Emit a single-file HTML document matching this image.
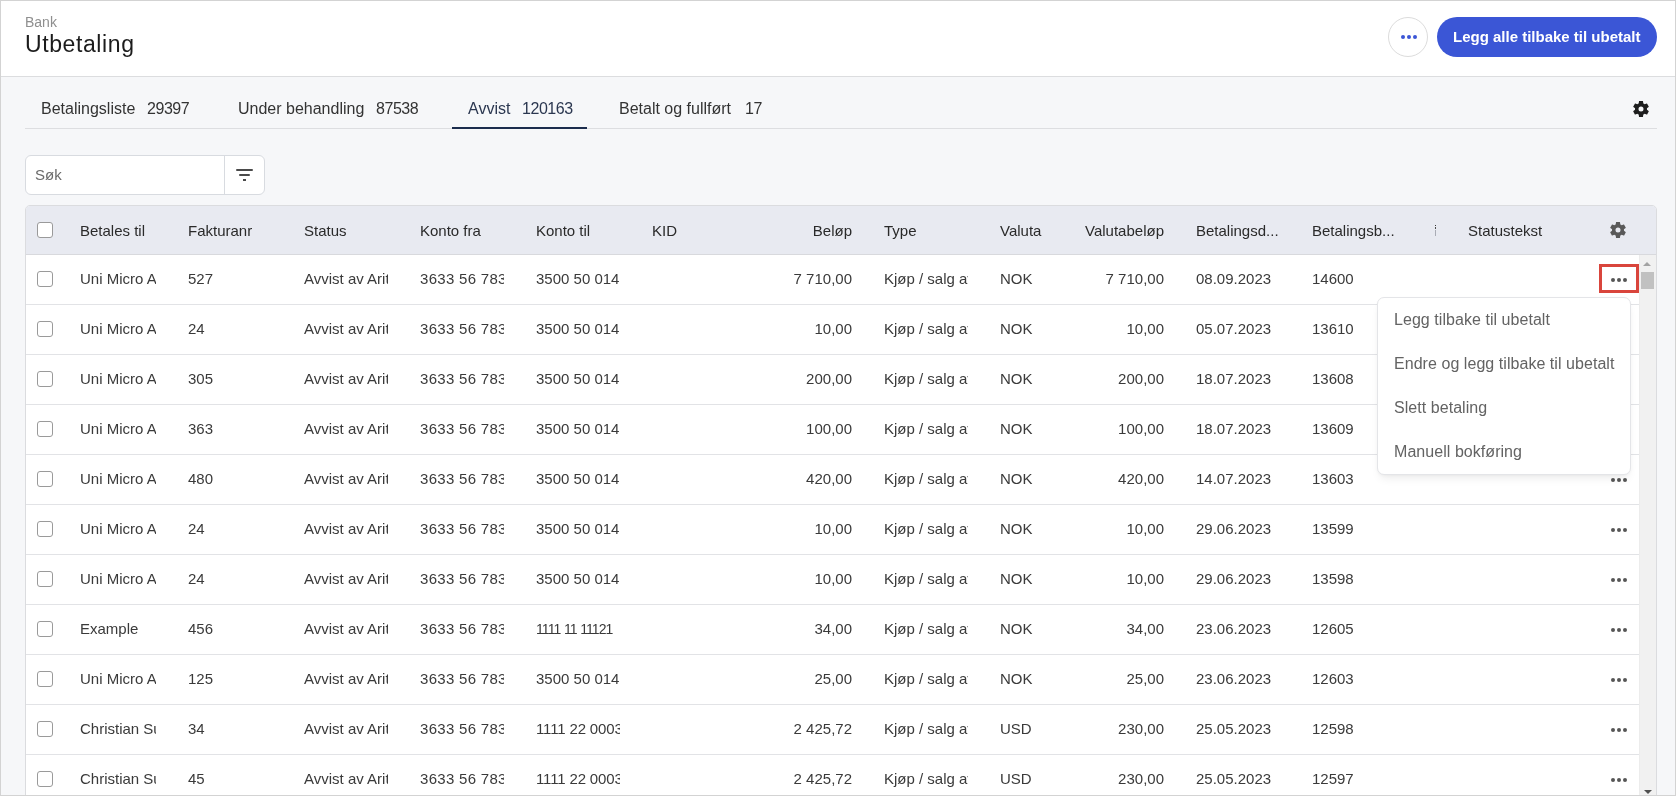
<!DOCTYPE html>
<html><head><meta charset="utf-8"><title>Utbetaling</title>
<style>
*{box-sizing:border-box;margin:0;padding:0}
html,body{width:1676px;height:796px;overflow:hidden;}
#root{position:absolute;left:0;top:0;width:1676px;height:796px;will-change:transform;background:#f6f7f9;font-family:"Liberation Sans",sans-serif;color:#333}
.a{position:absolute;white-space:nowrap}
.ic{position:absolute;display:block}
.dot{position:absolute;border-radius:50%;display:block}
#frame{position:absolute;left:0;top:0;width:1676px;height:796px;border:1px solid #d3d3d3;pointer-events:none;z-index:50}
#hdr{position:absolute;left:0;top:0;width:1676px;height:77px;background:#fff;border-bottom:1px solid #dcdddf}
.t{position:absolute;white-space:nowrap;line-height:20px;height:20px}
.clip{overflow:hidden}
.cb{position:absolute;width:16px;height:16px;border:1.5px solid #9a9a9a;border-radius:3px;background:#fff}
.hd{color:#2a2a2a;font-size:15px}
.cell{color:#3a3a3a;font-size:15px}
.r{text-align:right}
.row{position:absolute;left:26px;width:1613px;height:50px;background:#fff;border-bottom:1px solid #e2e3e6}
.mi{position:absolute;left:16px;font-size:16px;color:#636363;line-height:20px;white-space:nowrap;letter-spacing:0.05px}
</style></head><body><div id="root">
<div id="hdr">
  <div class="t" style="left:25px;top:12px;font-size:14px;color:#8f8f8f">Bank</div>
  <div class="t" style="left:25px;top:30px;font-size:23px;letter-spacing:0.6px;line-height:28px;height:28px;color:#1c1c1c">Utbetaling</div>
  <div class="a" style="left:1388px;top:17px;width:40px;height:40px;border:1px solid #dcdcdc;border-radius:50%;background:#fff"></div>
  <i class="dot" style="left:1401px;top:35px;width:4px;height:4px;background:#3b56d6"></i><i class="dot" style="left:1407px;top:35px;width:4px;height:4px;background:#3b56d6"></i><i class="dot" style="left:1413px;top:35px;width:4px;height:4px;background:#3b56d6"></i>
  <div class="a" style="left:1437px;top:17px;width:220px;height:40px;border-radius:20px;background:#3b56d6"></div>
  <div class="t" style="left:1453px;top:27px;font-size:15px;font-weight:bold;color:#fff">Legg alle tilbake til ubetalt</div>
</div>

<div class="a" style="left:25px;top:128px;width:1632px;height:1px;background:#dddee1"></div>
<div class="t" style="left:41px;top:99px;font-size:16px;color:#333">Betalingsliste</div>
<div class="t" style="left:147px;top:99px;font-size:16px;letter-spacing:-0.45px;color:#333">29397</div>
<div class="t" style="left:238px;top:99px;font-size:16px;color:#333">Under behandling</div>
<div class="t" style="left:376px;top:99px;font-size:16px;letter-spacing:-0.45px;color:#333">87538</div>
<div class="t" style="left:468px;top:99px;font-size:16px;color:#2b3750">Avvist</div>
<div class="t" style="left:522px;top:99px;font-size:16px;letter-spacing:-0.45px;color:#2b3750">120163</div>
<div class="t" style="left:619px;top:99px;font-size:16px;color:#333">Betalt og fullført</div>
<div class="t" style="left:745px;top:99px;font-size:16px;letter-spacing:-0.45px;color:#333">17</div>
<div class="a" style="left:452px;top:127px;width:135px;height:2px;background:#1b2c4d"></div>
<svg class="ic" style="left:1631px;top:98.7px;width:20px;height:20px" viewBox="0 0 24 24"><path fill="#1e1e1e" d="M19.14 12.94c.04-.3.06-.61.06-.94 0-.32-.02-.64-.07-.94l2.03-1.58c.18-.14.23-.41.12-.61l-1.92-3.32c-.12-.22-.37-.29-.59-.22l-2.39.96c-.5-.38-1.03-.7-1.62-.94l-.36-2.54c-.04-.24-.24-.41-.48-.41h-3.84c-.24 0-.43.17-.47.41l-.36 2.54c-.59.24-1.13.57-1.62.94l-2.39-.96c-.22-.08-.47 0-.59.22L2.74 8.870c-.12.21-.08.47.12.61l2.03 1.58c-.05.3-.09.63-.09.94s.02.64.07.94l-2.03 1.58c-.18.14-.23.41-.12.61l1.92 3.32c.12.22.37.29.59.22l2.39-.96c.5.38 1.03.7 1.62.94l.36 2.54c.05.24.24.41.48.41h3.840c.24 0 .44-.17.47-.41l.36-2.54c.59-.24 1.13-.56 1.62-.94l2.39.96c.22.08.47 0 .59-.22l1.92-3.32c.12-.22.07-.47-.12-.61l-2.01-1.58zM12 15a3 3 0 1 1 0-6 3 3 0 0 1 0 6z"/></svg>
<div class="a" style="left:25px;top:155px;width:240px;height:40px;border:1px solid #d8dbe0;border-radius:6px;background:#fff"></div>
<div class="a" style="left:224px;top:156px;width:1px;height:38px;background:#d8dbe0"></div>
<div class="t" style="left:35px;top:165px;font-size:15px;color:#6a6a6a">Søk</div>
<div class="a" style="left:236px;top:169px;width:17px;height:2px;background:#4a4a4a;border-radius:1px"></div>
<div class="a" style="left:239px;top:174px;width:11px;height:2px;background:#4a4a4a;border-radius:1px"></div>
<div class="a" style="left:243px;top:178.7px;width:3.4px;height:2px;background:#4a4a4a"></div>
<div class="a" style="left:25px;top:205px;width:1632px;height:600px;border:1px solid #dbdcdf;border-radius:5px 5px 0 0;background:#fff;overflow:hidden">
<div class="a" style="left:0;top:0;width:1630px;height:49px;background:#e8eaf1;border-bottom:1px solid #d8d9dd"></div>
</div>
<div class="cb" style="left:37px;top:222px"></div>
<div class="t hd" style="left:80px;top:221px">Betales til</div>
<div class="t hd" style="left:188px;top:221px">Fakturanr</div>
<div class="t hd" style="left:304px;top:221px">Status</div>
<div class="t hd" style="left:420px;top:221px">Konto fra</div>
<div class="t hd" style="left:536px;top:221px">Konto til</div>
<div class="t hd" style="left:652px;top:221px">KID</div>
<div class="t hd r" style="left:702px;width:150px;top:221px">Beløp</div>
<div class="t hd" style="left:884px;top:221px">Type</div>
<div class="t hd" style="left:1000px;top:221px">Valuta</div>
<div class="t hd r" style="left:1014px;width:150px;top:221px">Valutabeløp</div>
<div class="t hd" style="left:1196px;top:221px">Betalingsd...</div>
<div class="t hd" style="left:1312px;top:221px">Betalingsb...</div>
<div class="t hd" style="left:1468px;top:221px">Statustekst</div>
<div class="a" style="left:1435px;top:224.8px;width:1.2px;height:1.4px;background:#3a3a3a"></div>
<div class="a" style="left:1435px;top:227px;width:1.2px;height:2.2px;background:#4a4a4a"></div>
<div class="a" style="left:1435px;top:229.5px;width:1px;height:6.5px;background:#a9acb5"></div>
<svg class="ic" style="left:1608px;top:220px;width:20px;height:20px" viewBox="0 0 24 24"><path fill="#595959" d="M19.14 12.94c.04-.3.06-.61.06-.94 0-.32-.02-.64-.07-.94l2.03-1.58c.18-.14.23-.41.12-.61l-1.92-3.32c-.12-.22-.37-.29-.59-.22l-2.39.96c-.5-.38-1.03-.7-1.62-.94l-.36-2.54c-.04-.24-.24-.41-.48-.41h-3.84c-.24 0-.43.17-.47.41l-.36 2.54c-.59.24-1.13.57-1.62.94l-2.39-.96c-.22-.08-.47 0-.59.22L2.74 8.870c-.12.21-.08.47.12.61l2.03 1.58c-.05.3-.09.63-.09.94s.02.64.07.94l-2.03 1.58c-.18.14-.23.41-.12.61l1.92 3.32c.12.22.37.29.59.22l2.39-.96c.5.38 1.03.7 1.62.94l.36 2.54c.05.24.24.41.48.41h3.840c.24 0 .44-.17.47-.41l.36-2.54c.59-.24 1.13-.56 1.62-.94l2.39.96c.22.08.47 0 .59-.22l1.92-3.32c.12-.22.07-.47-.12-.61l-2.01-1.58zM12 15a3 3 0 1 1 0-6 3 3 0 0 1 0 6z"/></svg>
<div class="row" style="top:255px"></div>
<div class="cb" style="left:37px;top:271px"></div>
<div class="t cell clip" style="left:80px;width:76px;top:269px;letter-spacing:0px;">Uni Micro A</div>
<div class="t cell clip" style="left:188px;width:84px;top:269px;letter-spacing:0px;">527</div>
<div class="t cell clip" style="left:304px;width:84px;top:269px;letter-spacing:0px;">Avvist av Aritmetikk</div>
<div class="t cell clip" style="left:420px;width:84px;top:269px;letter-spacing:0.3px;">3633 56 78322</div>
<div class="t cell clip" style="left:536px;width:84px;top:269px;letter-spacing:0px;">3500 50 014</div>
<div class="t cell r" style="left:702px;width:150px;top:269px">7 710,00</div>
<div class="t cell clip" style="left:884px;width:84px;top:269px">Kjøp / salg av valuta</div>
<div class="t cell" style="left:1000px;top:269px">NOK</div>
<div class="t cell r" style="left:1014px;width:150px;top:269px">7 710,00</div>
<div class="t cell" style="left:1196px;top:269px">08.09.2023</div>
<div class="t cell" style="left:1312px;top:269px">14600</div>
<i class="dot" style="left:1611px;top:278px;width:4px;height:4px;background:#555"></i><i class="dot" style="left:1617px;top:278px;width:4px;height:4px;background:#555"></i><i class="dot" style="left:1623px;top:278px;width:4px;height:4px;background:#555"></i>
<div class="row" style="top:305px"></div>
<div class="cb" style="left:37px;top:321px"></div>
<div class="t cell clip" style="left:80px;width:76px;top:319px;letter-spacing:0px;">Uni Micro A</div>
<div class="t cell clip" style="left:188px;width:84px;top:319px;letter-spacing:0px;">24</div>
<div class="t cell clip" style="left:304px;width:84px;top:319px;letter-spacing:0px;">Avvist av Aritmetikk</div>
<div class="t cell clip" style="left:420px;width:84px;top:319px;letter-spacing:0.3px;">3633 56 78322</div>
<div class="t cell clip" style="left:536px;width:84px;top:319px;letter-spacing:0px;">3500 50 014</div>
<div class="t cell r" style="left:702px;width:150px;top:319px">10,00</div>
<div class="t cell clip" style="left:884px;width:84px;top:319px">Kjøp / salg av valuta</div>
<div class="t cell" style="left:1000px;top:319px">NOK</div>
<div class="t cell r" style="left:1014px;width:150px;top:319px">10,00</div>
<div class="t cell" style="left:1196px;top:319px">05.07.2023</div>
<div class="t cell" style="left:1312px;top:319px">13610</div>
<i class="dot" style="left:1611px;top:328px;width:4px;height:4px;background:#555"></i><i class="dot" style="left:1617px;top:328px;width:4px;height:4px;background:#555"></i><i class="dot" style="left:1623px;top:328px;width:4px;height:4px;background:#555"></i>
<div class="row" style="top:355px"></div>
<div class="cb" style="left:37px;top:371px"></div>
<div class="t cell clip" style="left:80px;width:76px;top:369px;letter-spacing:0px;">Uni Micro A</div>
<div class="t cell clip" style="left:188px;width:84px;top:369px;letter-spacing:0px;">305</div>
<div class="t cell clip" style="left:304px;width:84px;top:369px;letter-spacing:0px;">Avvist av Aritmetikk</div>
<div class="t cell clip" style="left:420px;width:84px;top:369px;letter-spacing:0.3px;">3633 56 78322</div>
<div class="t cell clip" style="left:536px;width:84px;top:369px;letter-spacing:0px;">3500 50 014</div>
<div class="t cell r" style="left:702px;width:150px;top:369px">200,00</div>
<div class="t cell clip" style="left:884px;width:84px;top:369px">Kjøp / salg av valuta</div>
<div class="t cell" style="left:1000px;top:369px">NOK</div>
<div class="t cell r" style="left:1014px;width:150px;top:369px">200,00</div>
<div class="t cell" style="left:1196px;top:369px">18.07.2023</div>
<div class="t cell" style="left:1312px;top:369px">13608</div>
<i class="dot" style="left:1611px;top:378px;width:4px;height:4px;background:#555"></i><i class="dot" style="left:1617px;top:378px;width:4px;height:4px;background:#555"></i><i class="dot" style="left:1623px;top:378px;width:4px;height:4px;background:#555"></i>
<div class="row" style="top:405px"></div>
<div class="cb" style="left:37px;top:421px"></div>
<div class="t cell clip" style="left:80px;width:76px;top:419px;letter-spacing:0px;">Uni Micro A</div>
<div class="t cell clip" style="left:188px;width:84px;top:419px;letter-spacing:0px;">363</div>
<div class="t cell clip" style="left:304px;width:84px;top:419px;letter-spacing:0px;">Avvist av Aritmetikk</div>
<div class="t cell clip" style="left:420px;width:84px;top:419px;letter-spacing:0.3px;">3633 56 78322</div>
<div class="t cell clip" style="left:536px;width:84px;top:419px;letter-spacing:0px;">3500 50 014</div>
<div class="t cell r" style="left:702px;width:150px;top:419px">100,00</div>
<div class="t cell clip" style="left:884px;width:84px;top:419px">Kjøp / salg av valuta</div>
<div class="t cell" style="left:1000px;top:419px">NOK</div>
<div class="t cell r" style="left:1014px;width:150px;top:419px">100,00</div>
<div class="t cell" style="left:1196px;top:419px">18.07.2023</div>
<div class="t cell" style="left:1312px;top:419px">13609</div>
<i class="dot" style="left:1611px;top:428px;width:4px;height:4px;background:#555"></i><i class="dot" style="left:1617px;top:428px;width:4px;height:4px;background:#555"></i><i class="dot" style="left:1623px;top:428px;width:4px;height:4px;background:#555"></i>
<div class="row" style="top:455px"></div>
<div class="cb" style="left:37px;top:471px"></div>
<div class="t cell clip" style="left:80px;width:76px;top:469px;letter-spacing:0px;">Uni Micro A</div>
<div class="t cell clip" style="left:188px;width:84px;top:469px;letter-spacing:0px;">480</div>
<div class="t cell clip" style="left:304px;width:84px;top:469px;letter-spacing:0px;">Avvist av Aritmetikk</div>
<div class="t cell clip" style="left:420px;width:84px;top:469px;letter-spacing:0.3px;">3633 56 78322</div>
<div class="t cell clip" style="left:536px;width:84px;top:469px;letter-spacing:0px;">3500 50 014</div>
<div class="t cell r" style="left:702px;width:150px;top:469px">420,00</div>
<div class="t cell clip" style="left:884px;width:84px;top:469px">Kjøp / salg av valuta</div>
<div class="t cell" style="left:1000px;top:469px">NOK</div>
<div class="t cell r" style="left:1014px;width:150px;top:469px">420,00</div>
<div class="t cell" style="left:1196px;top:469px">14.07.2023</div>
<div class="t cell" style="left:1312px;top:469px">13603</div>
<i class="dot" style="left:1611px;top:478px;width:4px;height:4px;background:#555"></i><i class="dot" style="left:1617px;top:478px;width:4px;height:4px;background:#555"></i><i class="dot" style="left:1623px;top:478px;width:4px;height:4px;background:#555"></i>
<div class="row" style="top:505px"></div>
<div class="cb" style="left:37px;top:521px"></div>
<div class="t cell clip" style="left:80px;width:76px;top:519px;letter-spacing:0px;">Uni Micro A</div>
<div class="t cell clip" style="left:188px;width:84px;top:519px;letter-spacing:0px;">24</div>
<div class="t cell clip" style="left:304px;width:84px;top:519px;letter-spacing:0px;">Avvist av Aritmetikk</div>
<div class="t cell clip" style="left:420px;width:84px;top:519px;letter-spacing:0.3px;">3633 56 78322</div>
<div class="t cell clip" style="left:536px;width:84px;top:519px;letter-spacing:0px;">3500 50 014</div>
<div class="t cell r" style="left:702px;width:150px;top:519px">10,00</div>
<div class="t cell clip" style="left:884px;width:84px;top:519px">Kjøp / salg av valuta</div>
<div class="t cell" style="left:1000px;top:519px">NOK</div>
<div class="t cell r" style="left:1014px;width:150px;top:519px">10,00</div>
<div class="t cell" style="left:1196px;top:519px">29.06.2023</div>
<div class="t cell" style="left:1312px;top:519px">13599</div>
<i class="dot" style="left:1611px;top:528px;width:4px;height:4px;background:#555"></i><i class="dot" style="left:1617px;top:528px;width:4px;height:4px;background:#555"></i><i class="dot" style="left:1623px;top:528px;width:4px;height:4px;background:#555"></i>
<div class="row" style="top:555px"></div>
<div class="cb" style="left:37px;top:571px"></div>
<div class="t cell clip" style="left:80px;width:76px;top:569px;letter-spacing:0px;">Uni Micro A</div>
<div class="t cell clip" style="left:188px;width:84px;top:569px;letter-spacing:0px;">24</div>
<div class="t cell clip" style="left:304px;width:84px;top:569px;letter-spacing:0px;">Avvist av Aritmetikk</div>
<div class="t cell clip" style="left:420px;width:84px;top:569px;letter-spacing:0.3px;">3633 56 78322</div>
<div class="t cell clip" style="left:536px;width:84px;top:569px;letter-spacing:0px;">3500 50 014</div>
<div class="t cell r" style="left:702px;width:150px;top:569px">10,00</div>
<div class="t cell clip" style="left:884px;width:84px;top:569px">Kjøp / salg av valuta</div>
<div class="t cell" style="left:1000px;top:569px">NOK</div>
<div class="t cell r" style="left:1014px;width:150px;top:569px">10,00</div>
<div class="t cell" style="left:1196px;top:569px">29.06.2023</div>
<div class="t cell" style="left:1312px;top:569px">13598</div>
<i class="dot" style="left:1611px;top:578px;width:4px;height:4px;background:#555"></i><i class="dot" style="left:1617px;top:578px;width:4px;height:4px;background:#555"></i><i class="dot" style="left:1623px;top:578px;width:4px;height:4px;background:#555"></i>
<div class="row" style="top:605px"></div>
<div class="cb" style="left:37px;top:621px"></div>
<div class="t cell clip" style="left:80px;width:76px;top:619px;letter-spacing:0px;">Example</div>
<div class="t cell clip" style="left:188px;width:84px;top:619px;letter-spacing:0px;">456</div>
<div class="t cell clip" style="left:304px;width:84px;top:619px;letter-spacing:0px;">Avvist av Aritmetikk</div>
<div class="t cell clip" style="left:420px;width:84px;top:619px;letter-spacing:0.3px;">3633 56 78322</div>
<div class="t cell clip" style="left:536px;width:84px;top:619px;letter-spacing:-0.9px;word-spacing:0.5px;font-size:14px;">1111 11 11121</div>
<div class="t cell r" style="left:702px;width:150px;top:619px">34,00</div>
<div class="t cell clip" style="left:884px;width:84px;top:619px">Kjøp / salg av valuta</div>
<div class="t cell" style="left:1000px;top:619px">NOK</div>
<div class="t cell r" style="left:1014px;width:150px;top:619px">34,00</div>
<div class="t cell" style="left:1196px;top:619px">23.06.2023</div>
<div class="t cell" style="left:1312px;top:619px">12605</div>
<i class="dot" style="left:1611px;top:628px;width:4px;height:4px;background:#555"></i><i class="dot" style="left:1617px;top:628px;width:4px;height:4px;background:#555"></i><i class="dot" style="left:1623px;top:628px;width:4px;height:4px;background:#555"></i>
<div class="row" style="top:655px"></div>
<div class="cb" style="left:37px;top:671px"></div>
<div class="t cell clip" style="left:80px;width:76px;top:669px;letter-spacing:0px;">Uni Micro A</div>
<div class="t cell clip" style="left:188px;width:84px;top:669px;letter-spacing:0px;">125</div>
<div class="t cell clip" style="left:304px;width:84px;top:669px;letter-spacing:0px;">Avvist av Aritmetikk</div>
<div class="t cell clip" style="left:420px;width:84px;top:669px;letter-spacing:0.3px;">3633 56 78322</div>
<div class="t cell clip" style="left:536px;width:84px;top:669px;letter-spacing:0px;">3500 50 014</div>
<div class="t cell r" style="left:702px;width:150px;top:669px">25,00</div>
<div class="t cell clip" style="left:884px;width:84px;top:669px">Kjøp / salg av valuta</div>
<div class="t cell" style="left:1000px;top:669px">NOK</div>
<div class="t cell r" style="left:1014px;width:150px;top:669px">25,00</div>
<div class="t cell" style="left:1196px;top:669px">23.06.2023</div>
<div class="t cell" style="left:1312px;top:669px">12603</div>
<i class="dot" style="left:1611px;top:678px;width:4px;height:4px;background:#555"></i><i class="dot" style="left:1617px;top:678px;width:4px;height:4px;background:#555"></i><i class="dot" style="left:1623px;top:678px;width:4px;height:4px;background:#555"></i>
<div class="row" style="top:705px"></div>
<div class="cb" style="left:37px;top:721px"></div>
<div class="t cell clip" style="left:80px;width:76px;top:719px;letter-spacing:0px;">Christian Su</div>
<div class="t cell clip" style="left:188px;width:84px;top:719px;letter-spacing:0px;">34</div>
<div class="t cell clip" style="left:304px;width:84px;top:719px;letter-spacing:0px;">Avvist av Aritmetikk</div>
<div class="t cell clip" style="left:420px;width:84px;top:719px;letter-spacing:0.3px;">3633 56 78322</div>
<div class="t cell clip" style="left:536px;width:84px;top:719px;letter-spacing:-0.15px;">1111 22 0003</div>
<div class="t cell r" style="left:702px;width:150px;top:719px">2 425,72</div>
<div class="t cell clip" style="left:884px;width:84px;top:719px">Kjøp / salg av valuta</div>
<div class="t cell" style="left:1000px;top:719px">USD</div>
<div class="t cell r" style="left:1014px;width:150px;top:719px">230,00</div>
<div class="t cell" style="left:1196px;top:719px">25.05.2023</div>
<div class="t cell" style="left:1312px;top:719px">12598</div>
<i class="dot" style="left:1611px;top:728px;width:4px;height:4px;background:#555"></i><i class="dot" style="left:1617px;top:728px;width:4px;height:4px;background:#555"></i><i class="dot" style="left:1623px;top:728px;width:4px;height:4px;background:#555"></i>
<div class="row" style="top:755px"></div>
<div class="cb" style="left:37px;top:771px"></div>
<div class="t cell clip" style="left:80px;width:76px;top:769px;letter-spacing:0px;">Christian Su</div>
<div class="t cell clip" style="left:188px;width:84px;top:769px;letter-spacing:0px;">45</div>
<div class="t cell clip" style="left:304px;width:84px;top:769px;letter-spacing:0px;">Avvist av Aritmetikk</div>
<div class="t cell clip" style="left:420px;width:84px;top:769px;letter-spacing:0.3px;">3633 56 78322</div>
<div class="t cell clip" style="left:536px;width:84px;top:769px;letter-spacing:-0.15px;">1111 22 0003</div>
<div class="t cell r" style="left:702px;width:150px;top:769px">2 425,72</div>
<div class="t cell clip" style="left:884px;width:84px;top:769px">Kjøp / salg av valuta</div>
<div class="t cell" style="left:1000px;top:769px">USD</div>
<div class="t cell r" style="left:1014px;width:150px;top:769px">230,00</div>
<div class="t cell" style="left:1196px;top:769px">25.05.2023</div>
<div class="t cell" style="left:1312px;top:769px">12597</div>
<i class="dot" style="left:1611px;top:778px;width:4px;height:4px;background:#555"></i><i class="dot" style="left:1617px;top:778px;width:4px;height:4px;background:#555"></i><i class="dot" style="left:1623px;top:778px;width:4px;height:4px;background:#555"></i>
<div class="a" style="left:1639px;top:255px;width:17px;height:541px;background:#f1f1f1;border-left:1px solid #ececec"></div>
<div class="a" style="left:1641px;top:272px;width:13px;height:17px;background:#c1c1c1"></div>
<div class="a" style="left:1643px;top:261.5px;width:0;height:0;border-left:4.5px solid transparent;border-right:4.5px solid transparent;border-bottom:4.5px solid #a3a3a3"></div>
<div class="a" style="left:1643.5px;top:790px;width:0;height:0;border-left:4px solid transparent;border-right:4px solid transparent;border-top:4.5px solid #505050"></div>
<div class="a" style="left:1599px;top:264px;width:40px;height:29px;border:3px solid #d9453c;z-index:5"></div>
<div class="a" style="left:1377px;top:297px;width:254px;height:178px;background:#fff;border:1px solid #e4e5e8;border-radius:7px;box-shadow:0 6px 10px -3px rgba(0,0,0,.08),0 1px 3px rgba(0,0,0,.03);z-index:10">
<div class="mi" style="top:12px">Legg tilbake til ubetalt</div>
<div class="mi" style="top:56px">Endre og legg tilbake til ubetalt</div>
<div class="mi" style="top:100px">Slett betaling</div>
<div class="mi" style="top:144px">Manuell bokføring</div>
</div>
<div id="frame"></div>
</div></body></html>
